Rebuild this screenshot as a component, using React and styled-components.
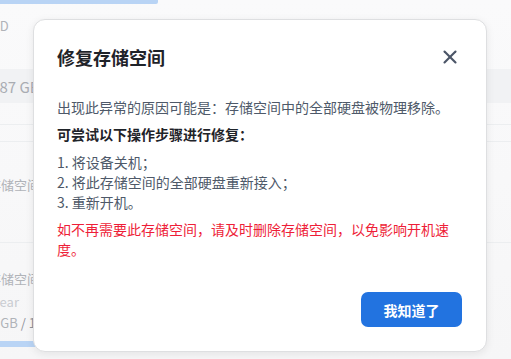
import React from 'react';
import styled, { createGlobalStyle } from 'styled-components';
import { X } from 'lucide-react';

const GlobalStyle = createGlobalStyle`
  html, body {
    margin: 0;
    padding: 0;
    background: #f8f8f9;
    font-family: "Noto Sans CJK SC", "Noto Sans", "Liberation Sans", sans-serif;
  }
  * { box-sizing: border-box; }
`

const Page = styled.div`
  position: relative;
  width: 511px;
  height: 359px;
  overflow: hidden;
  background: linear-gradient(180deg, #fafafb 0%, #f6f6f7 100%);
`

const Progress = styled.div`
  height: 4px;
  width: 158px;
  background: #b9d4f5;
  border-radius: 0 0 2px 0;
`

const BgList = styled.div`
  display: flex;
  flex-direction: column;
  color: #b0b3b8;
  font-size: 13px;
`

const BgRow = styled.div`
  height: ${p => p.h}px;
  display: flex;
  align-items: center;
  white-space: nowrap;
  background: ${p => p.band ? '#f1f2f4' : 'transparent'};
  border-bottom: ${p => p.line ? '1px solid #eceef0' : 'none'};
  font-size: ${p => p.size || 13}px;
  color: ${p => p.tone || '#b0b3b8'};
`

const BgText = styled.span`
  margin-left: ${p => p.shift || 0}px;
`

const Strong = styled.span`
  color: #8f939a;
`

const BlueBar = styled.div`
  height: 6px;
  width: 120px;
  margin-top: 9px;
  background: #b9d4f5;
`

const Modal = styled.div`
  position: absolute;
  top: 19px;
  left: 33px;
  width: 454px;
  height: 333px;
  background: #fff;
  border: 1px solid #dedfe1;
  border-radius: 12px;
  box-shadow: 0 2px 8px rgba(0, 0, 0, 0.08);
  padding: 24px 24px 24px 23px;
  display: flex;
  flex-direction: column;
`

const Header = styled.div`
  display: flex;
  align-items: center;
  justify-content: space-between;
  height: 26px;
  margin-bottom: 27px;
`

const Title = styled.h2`
  margin: 0;
  font-size: 18px;
  font-weight: 700;
  color: #1f2329;
  line-height: 26px;
`

const Close = styled.button`
  border: none;
  background: none;
  padding: 0;
  margin-right: 1px;
  display: flex;
  color: #4b5567;
  cursor: pointer;
`

const Text = styled.p`
  margin: 0 0 7px;
  font-size: 14px;
  line-height: 20px;
  color: ${p => p.danger ? '#ee1e38' : p.strong ? '#1f2329' : '#4e5969'};
  font-weight: ${p => p.strong ? 700 : 400};
`

const Steps = styled.ol`
  margin: 0 0 7px;
  padding: 1px 0 0;
  list-style: none;
  font-size: 14px;
  line-height: 20px;
  color: #4e5969;
`

const Footer = styled.div`
  margin-top: auto;
  display: flex;
  justify-content: flex-end;
`

const Primary = styled.button`
  width: 101px;
  height: 35px;
  border: none;
  border-radius: 7px;
  background: #2273e0;
  color: #fff;
  font-family: inherit;
  font-size: 14px;
  font-weight: 700;
  cursor: pointer;
`

export default function App() {
  return (
    <>
      <GlobalStyle />
      <Page>
        <Progress />
        <BgList>
          <BgRow h={42}><BgText shift={-4}>ID</BgText></BgRow>
          <BgRow h={23} />
          <BgRow h={34} band size={15} tone="#a9acb2"><BgText shift={-13}>2.87 GB</BgText></BgRow>
          <BgRow h={22} line />
          <BgRow h={17} line />
          <BgRow h={84}><BgText shift={-12}>存储空间</BgText></BgRow>
          <BgRow h={17} line />
          <BgRow h={23} />
          <BgRow h={24}><BgText shift={-12}>存储空间</BgText></BgRow>
          <BgRow h={22} tone="#c9ccd1"><BgText shift={-19}>Linear</BgText></BgRow>
          <BgRow h={20}><BgText shift={-17}>10 GB <Strong>/ 1.8 TB</Strong></BgText></BgRow>
        </BgList>
        <BlueBar />

        <Modal>
          <Header>
            <Title>修复存储空间</Title>
            <Close aria-label="关闭">
              <X size={22} strokeWidth={2.3} />
            </Close>
          </Header>
          <Text>出现此异常的原因可能是：存储空间中的全部硬盘被物理移除。</Text>
          <Text strong>可尝试以下操作步骤进行修复：</Text>
          <Steps>
            <li>1. 将设备关机；</li>
            <li>2. 将此存储空间的全部硬盘重新接入；</li>
            <li>3. 重新开机。</li>
          </Steps>
          <Text danger>如不再需要此存储空间，请及时删除存储空间，以免影响开机速度。</Text>
          <Footer>
            <Primary>我知道了</Primary>
          </Footer>
        </Modal>
      </Page>
    </>
  );
}
